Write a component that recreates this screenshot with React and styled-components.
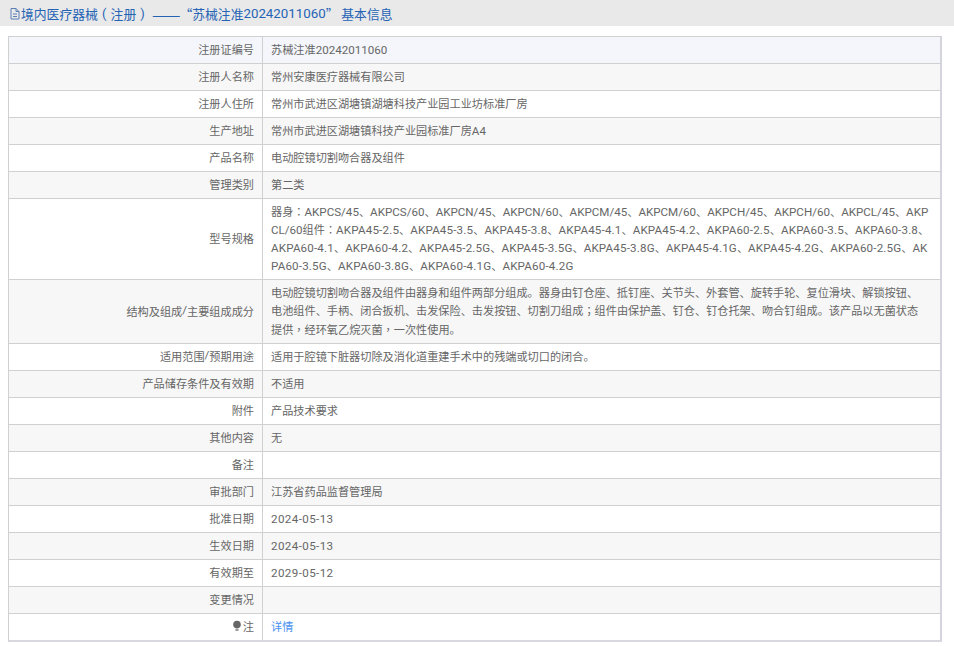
import React from "react";
import styled, { createGlobalStyle } from "styled-components";

const Global = createGlobalStyle`
  html, body { margin: 0; padding: 0; background: #fff; }
  body { font-family: "Noto Sans CJK SC", sans-serif; font-size: 11.17px; color: #666; }
`
const Header = styled.div`
  height: 26px;
  background: #e9e9e9;
  display: flex;
  align-items: center;
  padding-left: 9px;
  margin-bottom: 10px;
  color: #2563b5;
  font-size: 12.8px;
  white-space: pre;
`
const Icon = styled.svg`
  width: 12px;
  height: 13px;
  flex: none;
`
const Num = styled.span`
  font-family: Roboto, sans-serif;
  font-size: 13.3px;
`
const Paren = styled.span`
  display: inline-block;
  width: 1em;
  text-align: center;
  font-family: Roboto, sans-serif;
`
const Dash = styled.span`
  font-size: 17px;
  margin: 0 -1px 0 3px;
`
const Table = styled.div`
  width: 934px;
  margin-left: 8px;
  border: 1px solid #d0d0d0;
  border-right: 2px solid #d4d4dc;
  border-bottom: 2px solid #d8d8de;
  box-sizing: border-box;
`
const rowBg = { blue: "#f4f6fb", grey: "#f7f7f7", white: "#fff" }
const Row = styled.div`
  display: grid;
  grid-template-columns: 254px 1fr;
  min-height: ${p => p.$height}px;
  background: ${p => rowBg[p.$tone]};
  border-top: ${p => (p.$first ? "none" : "1px solid #d0d0d0")};
  box-sizing: border-box;
`
const Label = styled.div`
  display: flex;
  align-items: center;
  justify-content: flex-end;
  padding: 0 8px 2px 0;
  border-right: 1px solid #d0d0d0;
`
const Value = styled.div`
  padding: 0 4px 2px 8px;
  align-self: center;
  line-height: ${p => p.$lh}px;
  white-space: pre-line;
`
const Lat = styled.span`
  font-family: Roboto, sans-serif;
  font-size: 11.6px;
  line-height: 1;
  letter-spacing: ${p => p.$track}px;
`
// centred full-width punctuation, as in the reference
const Punct = styled.span`
  font-family: "Noto Sans CJK TC", sans-serif;
  line-height: 1;
`
const Bulb = styled.svg`
  width: 10px;
  height: 12px;
  margin-right: 1px;
`
const Link = styled.a`
  color: #4a90f0;
  text-decoration: none;
`

// hyphenated model numbers and dates run a little wider than the plain ones
const track = part => (/^\d{4}-/.test(part) ? 0.4 : part.includes("-") ? 0.17 : 0)

const rich = text =>
  text.split(/([A-Za-z0-9./-]+|[：，；])/).map((part, i) => {
    if (i % 2 === 0) return part
    return /[：，；]/.test(part)
      ? <Punct key={i}>{part}</Punct>
      : <Lat key={i} $track={track(part)}>{part}</Lat>
  })

const rows = [
  ["注册证编号", "苏械注准20242011060"],
  ["注册人名称", "常州安康医疗器械有限公司"],
  ["注册人住所", "常州市武进区湖塘镇湖塘科技产业园工业坊标准厂房"],
  ["生产地址", "常州市武进区湖塘镇科技产业园标准厂房A4"],
  ["产品名称", "电动腔镜切割吻合器及组件"],
  ["管理类别", "第二类"],
  ["型号规格", "器身：AKPCS/45、AKPCS/60、AKPCN/45、AKPCN/60、AKPCM/45、AKPCM/60、AKPCH/45、AKPCH/60、AKPCL/45、AKP\nCL/60组件：AKPA45-2.5、AKPA45-3.5、AKPA45-3.8、AKPA45-4.1、AKPA45-4.2、AKPA60-2.5、AKPA60-3.5、AKPA60-3.8、\nAKPA60-4.1、AKPA60-4.2、AKPA45-2.5G、AKPA45-3.5G、AKPA45-3.8G、AKPA45-4.1G、AKPA45-4.2G、AKPA60-2.5G、AK\nPA60-3.5G、AKPA60-3.8G、AKPA60-4.1G、AKPA60-4.2G", 81, 18],
  ["结构及组成/主要组成成分", "电动腔镜切割吻合器及组件由器身和组件两部分组成。器身由钉仓座、抵钉座、关节头、外套管、旋转手轮、复位滑块、解锁按钮、\n电池组件、手柄、闭合扳机、击发保险、击发按钮、切割刀组成；组件由保护盖、钉仓、钉仓托架、吻合钉组成。该产品以无菌状态\n提供，经环氧乙烷灭菌，一次性使用。", 64, 18.5],
  ["适用范围/预期用途", "适用于腔镜下脏器切除及消化道重建手术中的残端或切口的闭合。"],
  ["产品储存条件及有效期", "不适用"],
  ["附件", "产品技术要求"],
  ["其他内容", "无"],
  ["备注", ""],
  ["审批部门", "江苏省药品监督管理局"],
  ["批准日期", "2024-05-13"],
  ["生效日期", "2024-05-13"],
  ["有效期至", "2029-05-12"],
  ["变更情况", ""],
]

const App = () => {
  return (
    <>
      <Global />
      <Header>
        <Icon viewBox="0 0 12 13" fill="none" stroke="#5b7fb5" strokeWidth="1">
          <path d="M2 1.5h5l3 3v7.5H2z" />
          <path d="M7 1.5v3h3M4 7h4M4 9.5h4" />
        </Icon>
        境内医疗器械<Paren>(</Paren>注册<Paren>)</Paren><Dash>——</Dash>“苏械注准<Num>20242011060</Num>” 基本信息
      </Header>
      <Table>
        {rows.map(([label, value, height = 27, lh = 18], i) => (
          <Row
            key={label}
            $tone={i === 0 ? "blue" : i % 2 ? "grey" : "white"}
            $height={i === 0 ? 26 : height}
            $first={i === 0}
          >
            <Label>{rich(label)}</Label>
            <Value $lh={lh}>{rich(value)}</Value>
          </Row>
        ))}
        <Row $tone="white" $height={27}>
          <Label>
            <Bulb viewBox="0 0 10 12">
              <circle cx="5" cy="4.5" r="3.8" fill="#666" />
              <rect x="3.5" y="8.5" width="3" height="2.5" fill="#999" />
            </Bulb>
            注
          </Label>
          <Value $lh={18}><Link href="#">详情</Link></Value>
        </Row>
      </Table>
    </>
  )
}

export default App
